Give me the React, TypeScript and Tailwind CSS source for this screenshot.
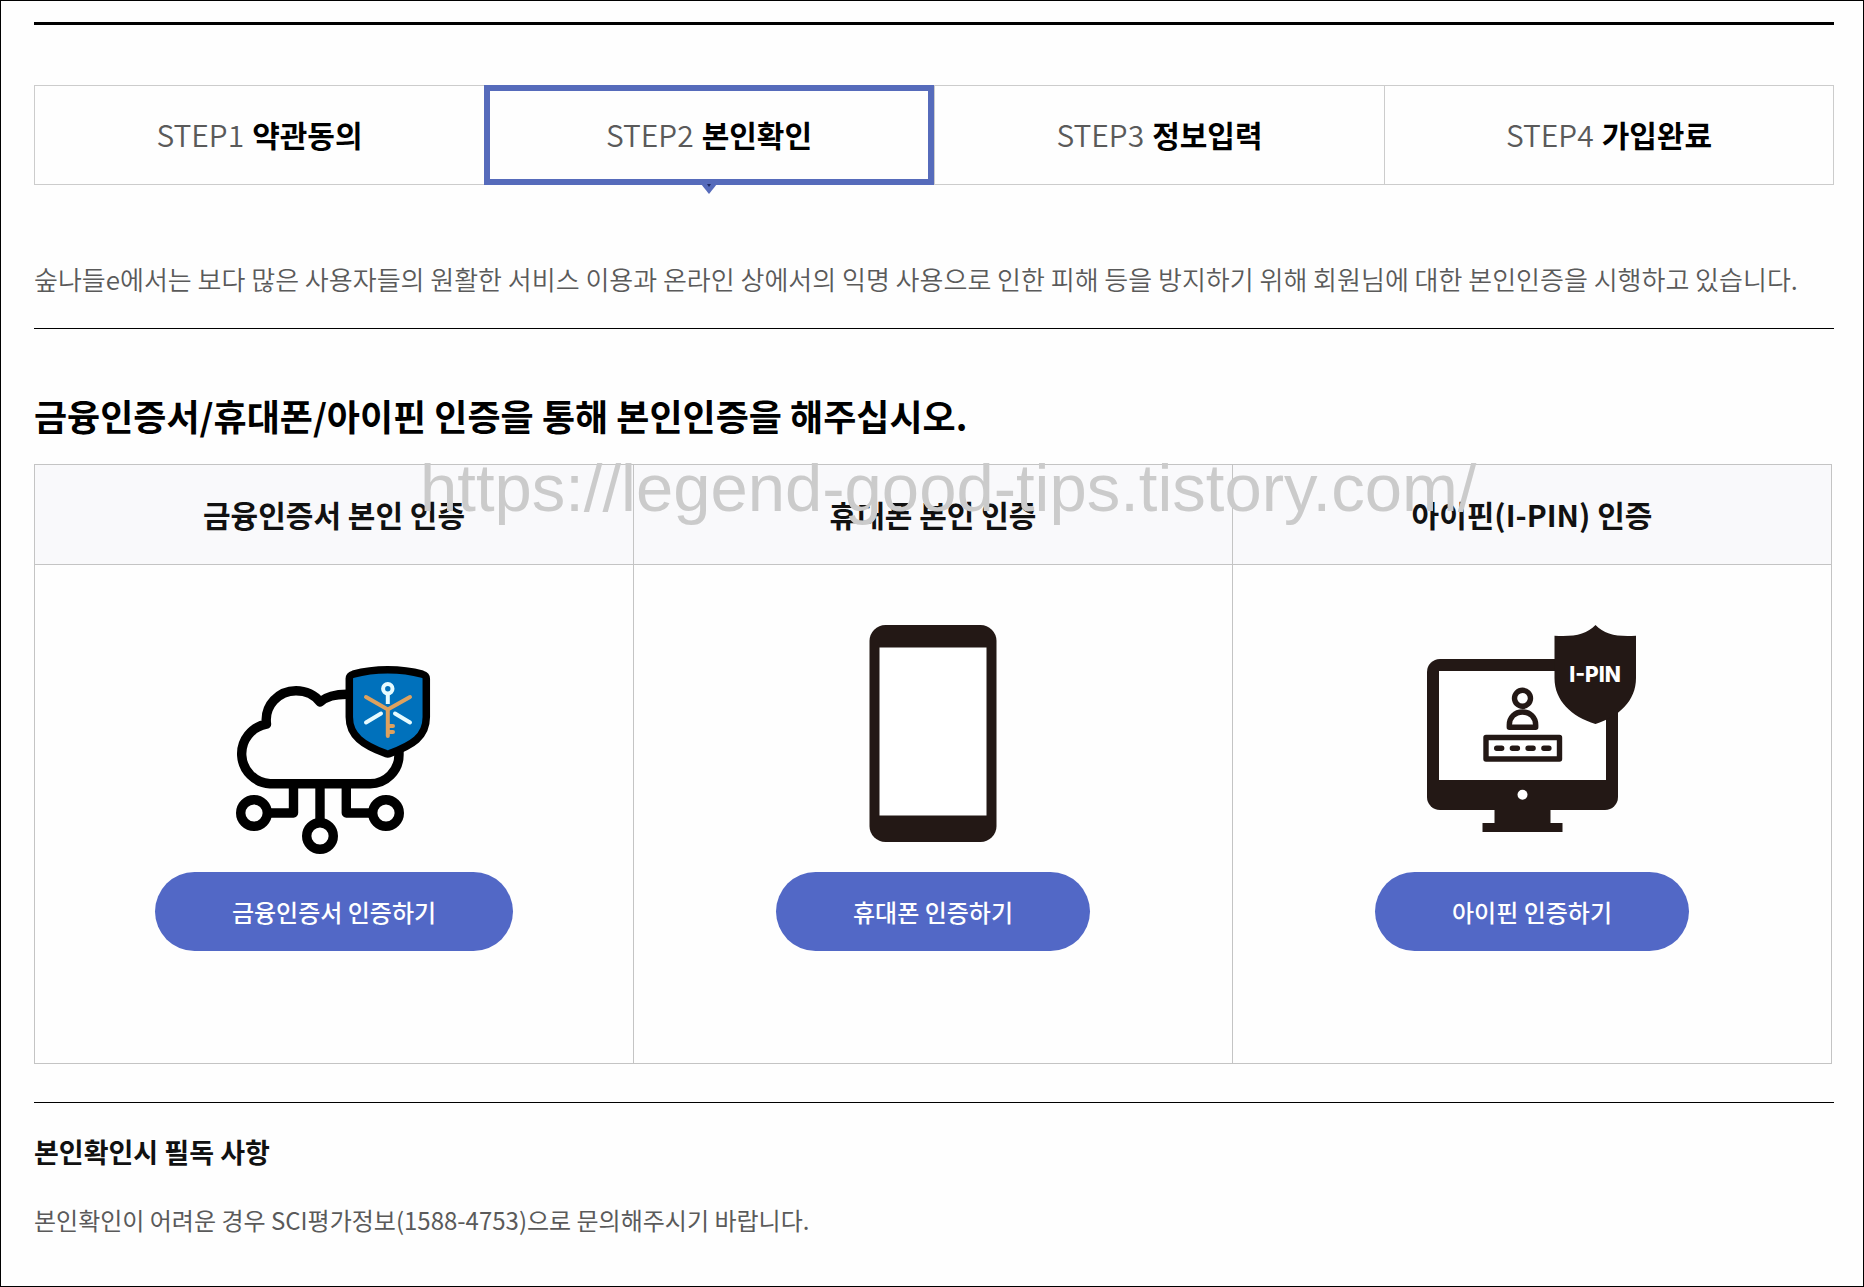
import type { ReactNode } from "react";

const steps = [
  { no: "STEP1", name: "약관동의" },
  { no: "STEP2", name: "본인확인", active: true },
  { no: "STEP3", name: "정보입력" },
  { no: "STEP4", name: "가입완료" },
];

function CloudCertIcon() {
  return (
    <svg width="240" height="247" viewBox="0 0 240 247" fill="none" aria-hidden="true">
      <g stroke="#000" strokeWidth="9.4" strokeLinejoin="round">
        <path d="M156 158.7H56a30 30 0 0 1-3.500-59.500C50 80 65 65.700 82 65.700c10 0 19 4.500 24 11.300 7-5.500 14-7.700 27-7.700M185 120v9.700a29 29 0 0 1-29 29" />
        <path d="M53 188h26.500v-29M106 159v38M159 188h-26.700v-29" />
        <circle cx="40" cy="188" r="13.300" />
        <circle cx="106" cy="211" r="13.300" />
        <circle cx="172" cy="188" r="13.300" />
      </g>
      <path
        d="M135.300 53.500c0-2.500 1.500-3.500 4-4.300 21-6 48-6 69 0 2.500.8 4 1.800 4 4.300V92c0 20-14 28-36.500 36.600a5 5 0 0 1-4 0C149 120 135.300 111 135.300 92Z"
        fill="#0071bc"
        stroke="#000"
        strokeWidth="7.500"
        strokeLinejoin="round"
      />
      <g strokeWidth="4" strokeLinecap="round">
        <g stroke="#e6fbff">
          <circle cx="173.800" cy="63.800" r="4.700" />
          <path strokeLinecap="butt" d="M173.800 68v11" />
          <path d="M152 97.500l15-9M181 88.500l15 9" />
        </g>
        <path stroke="#dda15e" d="M152 72l21.800 12.500L196 72M173.800 84.500V111M175 101h4M175 107h4" />
      </g>
    </svg>
  );
}

function PhoneIcon() {
  return (
    <svg width="240" height="247" viewBox="0 0 240 247" aria-hidden="true">
      <rect x="56.500" y="0" width="127" height="217" rx="16" fill="#231815" />
      <rect x="66.500" y="22.500" width="107" height="168" fill="#fff" />
    </svg>
  );
}

function IpinIcon() {
  return (
    <svg width="240" height="247" viewBox="0 0 240 247" fill="none" aria-hidden="true">
      <rect x="15" y="34" width="191" height="151" rx="13" fill="#231815" />
      <rect x="27" y="46" width="167" height="109" fill="#fff" />
      <circle cx="110.500" cy="169.700" r="5" fill="#fff" />
      <path d="M82.500 184h56v14h12v9h-80v-9h12Z" fill="#231815" />
      <g stroke="#231815" strokeWidth="5.400" strokeLinejoin="round">
        <circle cx="110.500" cy="73.300" r="8" />
        <path d="M97.300 102.300V100c0-7.500 5.500-13 13.200-13s13.200 5.500 13.200 13v2.300Z" />
        <rect x="74" y="112.500" width="73.500" height="21.500" />
        <path strokeLinecap="round" d="M84.700 123.300h5M100.400 123.300h5M116.100 123.300h5M131.900 123.300h5" />
      </g>
      <path
        d="M183.500 0c9 9.500 22 12 40.500 10.700V53c0 23-17 38.500-40.500 46-24-7.500-41-23-41-46V10.700C161.500 12 174.500 9.500 183.500 0Z"
        fill="#231815"
      />
      <text
        x="183"
        y="57"
        textAnchor="middle"
        fill="#fff"
        className="font-['Inter',sans-serif] text-[21px] font-extrabold"
      >
        I-PIN
      </text>
    </svg>
  );
}

const methods: { title: string; action: string; icon: ReactNode }[] = [
  { title: "금융인증서 본인 인증", action: "금융인증서 인증하기", icon: <CloudCertIcon /> },
  { title: "휴대폰 본인 인증", action: "휴대폰 인증하기", icon: <PhoneIcon /> },
  { title: "아이핀(I-PIN) 인증", action: "아이핀 인증하기", icon: <IpinIcon /> },
];

export default function App() {
  return (
    <main className="min-h-screen border border-black bg-[#fefefe] pt-[21px] pr-[29px] pl-[33px] font-['Noto_Sans_CJK_KR',sans-serif] text-black">
      <ol className="grid grid-cols-4 border-t-3 border-black pt-[60px]">
        {steps.map((s) => (
          <li
            key={s.no}
            aria-current={s.active ? "step" : undefined}
            className={
              s.active
                ? "relative flex h-[100px] items-center justify-center border-6 border-[#566bbb] pb-[2px] text-[30px]"
                : "flex h-[100px] items-center justify-center border-y border-l border-[#ccc] pb-[2px] text-[30px] last:border-r"
            }
          >
            <span className="font-[350] text-[#5a5a5a]">{s.no}</span>
            <strong className="ml-2 font-bold">{s.name}</strong>
            {s.active && (
              <svg
                className="absolute top-full left-1/2 -translate-x-1/2"
                width="16"
                height="16"
                viewBox="0 0 16 16"
                aria-hidden="true"
              >
                <path d="M0 5h16L8 15Z" fill="#566bbb" />
                <path d="M6 5h4l-2 3Z" fill="#1f2a63" />
              </svg>
            )}
          </li>
        ))}
      </ol>

      <p className="mt-[74px] border-b border-black pb-[29px] text-[26px] leading-[40px] font-[350] text-[#5a5a5a]">
        숲나들e에서는 보다 많은 사용자들의 원활한 서비스 이용과 온라인 상에서의 익명 사용으로 인한 피해 등을 방지하기 위해 회원님에 대한 본인인증을 시행하고 있습니다.
      </p>

      <h1 className="mt-[61px] text-[36px] leading-[50px] font-bold">
        금융인증서/휴대폰/아이핀 인증을 통해 본인인증을 해주십시오.
      </h1>

      <div className="relative mt-[24px] mr-[2px]">
        <table className="w-full table-fixed border-collapse">
          <thead>
            <tr className="h-[100px] bg-[#f9f9fb]">
              {methods.map((m) => (
                <th key={m.title} scope="col" className="border border-[#c4c4c4] text-[30px] font-bold text-[#111]">
                  {m.title}
                </th>
              ))}
            </tr>
          </thead>
          <tbody>
            <tr>
              {methods.map((m) => (
                <td key={m.title} className="border border-[#c4c4c4] pt-[60px] pb-[112px]">
                  <div className="flex flex-col items-center">
                    {m.icon}
                    <button
                      type="button"
                      className="h-[79px] rounded-full bg-[#5268c6] px-[77px] text-[24px] font-medium text-white"
                    >
                      {m.action}
                    </button>
                  </div>
                </td>
              ))}
            </tr>
          </tbody>
        </table>
        <div className="pointer-events-none absolute -top-[14px] left-[386px] font-['Liberation_Sans',sans-serif] text-[67px] leading-[76px] whitespace-nowrap text-[#cbcbcb]">
          https://legend-good-tips.tistory.com/
        </div>
      </div>

      <section className="mt-[38px] border-t border-black pt-[29px] pb-[40px]">
        <h2 className="text-[27px] leading-[40px] font-bold text-[#111]">본인확인시 필독 사항</h2>
        <p className="mt-[28px] text-[24px] leading-[40px] text-[#5a5a5a]">
          본인확인이 어려운 경우 SCI평가정보(1588-4753)으로 문의해주시기 바랍니다.
        </p>
      </section>
    </main>
  );
}
